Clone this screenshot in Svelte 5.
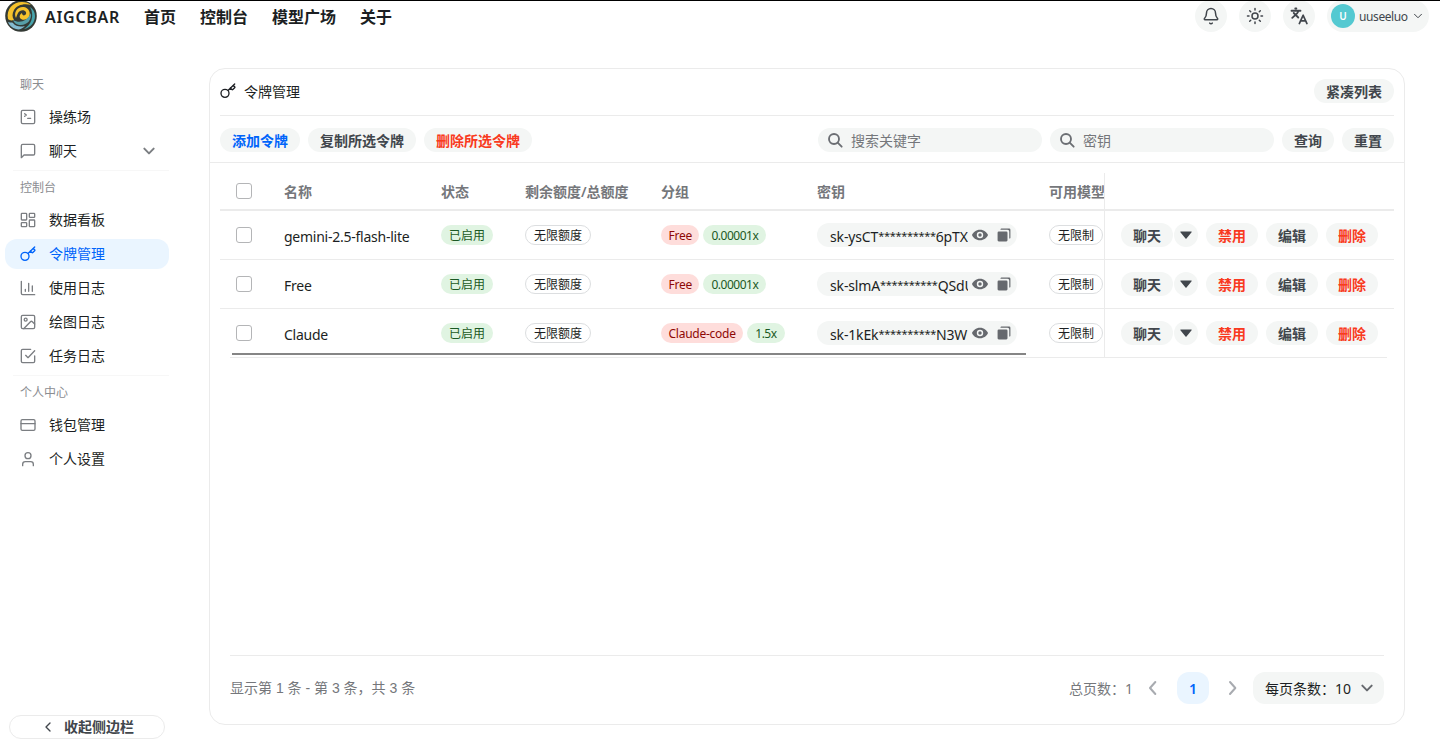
<script lang="ts">
  const navLinks = ['首页', '控制台', '模型广场', '关于'];

  const sections = [
    {
      title: '聊天',
      items: [
        { label: '操练场', icon: 'terminal' },
        { label: '聊天', icon: 'message', expandable: true },
      ],
    },
    {
      title: '控制台',
      items: [
        { label: '数据看板', icon: 'dashboard' },
        { label: '令牌管理', icon: 'key' },
        { label: '使用日志', icon: 'chart' },
        { label: '绘图日志', icon: 'image' },
        { label: '任务日志', icon: 'check' },
      ],
    },
    {
      title: '个人中心',
      items: [
        { label: '钱包管理', icon: 'card' },
        { label: '个人设置', icon: 'user' },
      ],
    },
  ];

  const columns = ['名称', '状态', '剩余额度/总额度', '分组', '密钥', '可用模型'];

  const mask = '**********';

  const tokens = [
    { name: 'gemini-2.5-flash-lite', group: 'Free', ratio: '0.00001x', prefix: 'sk-ysCT', suffix: '6pTX' },
    { name: 'Free', group: 'Free', ratio: '0.00001x', prefix: 'sk-slmA', suffix: 'QSdU' },
    { name: 'Claude', group: 'Claude-code', ratio: '1.5x', prefix: 'sk-1kEk', suffix: 'N3WE' },
  ];

  let activeItem = $state('令牌管理');
  let keyword = $state('');
  let tokenKey = $state('');
  let selected = $state([false, false, false]);
  let allSelected = $derived(selected.every(Boolean));

  function toggleAll() {
    const next = !allSelected;
    selected = selected.map(() => next);
  }

  function reset() {
    keyword = '';
    tokenKey = '';
  }
</script>

{#snippet icon(name: string)}
  <svg class="icon" viewBox="0 0 24 24">
    {#if name === 'terminal'}
      <rect x="2" y="2" width="20" height="20" rx="2" />
      <path d="m7 7 2.500 2L7 11M11.500 14h4.500" />
    {:else if name === 'message'}
      <path d="M22 16a2 2 0 0 1-2 2H6l-4 4V4a2 2 0 0 1 2-2h16a2 2 0 0 1 2 2z" />
    {:else if name === 'dashboard'}
      <rect x="2" y="2" width="8" height="10" rx="1" />
      <rect x="14" y="2" width="8" height="6" rx="1" />
      <rect x="14" y="12" width="8" height="10" rx="1" />
      <rect x="2" y="16" width="8" height="6" rx="1" />
    {:else if name === 'key'}
      <circle cx="7.500" cy="15.500" r="6" />
      <path d="m22 1.500-10 9.600M15.500 7.500l2.300 2.300a1 1 0 0 0 1.400 0l2.800-2.800a1 1 0 0 0 0-1.400L19.500 3.500" />
    {:else if name === 'chart'}
      <path d="M2 2v18a2 2 0 0 0 2 2h18M18.500 17V9M13 17V5M8 17v-3" />
    {:else if name === 'image'}
      <rect x="2" y="2" width="20" height="20" rx="2" />
      <circle cx="8.500" cy="8.500" r="2.200" />
      <path d="m22 15-3.500-3.500a2 2 0 0 0-2.800 0L5.500 22" />
    {:else if name === 'check'}
      <path d="m8.500 11 3.500 3.500L22 4" />
      <path d="M22 12v8a2 2 0 0 1-2 2H4a2 2 0 0 1-2-2V4a2 2 0 0 1 2-2h12" />
    {:else if name === 'card'}
      <rect x="1.500" y="4" width="21" height="16" rx="2" />
      <path d="M1.500 10h21" />
    {:else if name === 'user'}
      <path d="M20 22v-2a4 4 0 0 0-4-4H8a4 4 0 0 0-4 4v2" />
      <circle cx="12" cy="7" r="4.500" />
    {:else if name === 'bell'}
      <path d="M10.300 21.500a2 2 0 0 0 3.400 0" />
      <path d="M3.300 15.300A1 1 0 0 0 4 17h16a1 1 0 0 0 .7-1.700C19.400 14 18 12.500 18 8A6 6 0 0 0 6 8c0 4.500-1.400 6-2.700 7.300" />
    {:else if name === 'sun'}
      <circle cx="12" cy="12" r="4" />
      <path d="M12 2v2M12 20v2M4.900 4.900l1.400 1.400M17.700 17.700l1.400 1.400M2 12h2M20 12h2M6.300 17.700l-1.400 1.400M19.100 4.900l-1.400 1.400" />
    {:else if name === 'language'}
      <path d="m5 8 6 6M3 14.500l6.500-6 2-3.500M2 5h12M7 2h1.500M22.500 22l-5-11-5 11M14 18.500h7" />
    {:else if name === 'down'}
      <path d="m5 8.500 7 7 7-7" />
    {:else if name === 'left'}
      <path d="m15.500 3-8 9 8 9" />
    {:else if name === 'back'}
      <path d="m15 6-6 6 6 6" />
    {:else if name === 'right'}
      <path d="m7.500 3 8 9-8 9" />
    {:else if name === 'search'}
      <circle cx="10.500" cy="10.500" r="7.500" />
      <path d="m16 16 6 6" />
    {:else if name === 'eye'}
      <path class="solid" fill-rule="evenodd" d="M12 4C6 4 1.500 8 0 12c1.500 4 6 8 12 8s10.500-4 12-8c-1.500-4-6-8-12-8Zm0 3.200a4.800 4.800 0 1 1 0 9.600 4.800 4.800 0 0 1 0-9.600Z" />
      <circle class="solid" cx="12" cy="12" r="2.600" />
    {:else if name === 'copy'}
      <path class="solid" d="M6 2a1.500 1.500 0 0 1 1.500-1H21a2 2 0 0 1 2 2v13.500a1.500 1.500 0 0 1-1 1.500h-1V6a3 3 0 0 0-3-3H6Z" />
      <rect class="solid" x="1" y="6" width="17" height="17" rx="2" />
    {:else if name === 'caret'}
      <path class="solid" d="M1.500 5h21a1 1 0 0 1 .7 1.700L13 19.200a1.400 1.400 0 0 1-2 0L.8 6.700A1 1 0 0 1 1.500 5Z" />
    {/if}
  </svg>
{/snippet}

<div class="page">
  <header>
    <svg class="logo" viewBox="0 0 32 32">
      <circle cx="16" cy="16" r="15.800" fill="#343a35" />
      <path d="M3 19C1 9 8 2 17 2c4 0 7 1 9 3-7-2-14 0-17 5-2 4-2 7 0 10-3 1-5 0-6-1Z" fill="#f6c32c" />
      <path d="M11 18C8 12 13 6 19 7c5 1 7 6 5 10-2 3-7 4-9 1-1-2 0-4 2-5 0 3 3 3 4 1 1-3-3-5-6-3-2 1-3 4-4 7Z" fill="#f6c32c" />
      <path d="M25 7c3 2 5 5 5 9 0 7-5 12-11 13 7-4 11-13 6-22Z" fill="#48a5ad" />
      <path d="M26 13c1 7-4 12-10 12-4 0-7-2-8-5 7 4 14 1 18-7Z" fill="#579fa8" />
      <path d="M3 22c3 1 4 0 5 1 3 4 8 4 12 3-3 3-6 4-9 3-4-1-7-4-8-7Z" fill="#83bad0" />
    </svg>
    <span class="brand">AIGCBAR</span>
    <nav>
      {#each navLinks as link}
        <a href="#top">{link}</a>
      {/each}
    </nav>
    <div class="header-actions">
      <button class="round">{@render icon('bell')}</button>
      <button class="round">{@render icon('sun')}</button>
      <button class="round language">{@render icon('language')}</button>
      <button class="account">
        <span class="avatar">U</span>
        <span class="username">uuseeluo</span>
        {@render icon('down')}
      </button>
    </div>
  </header>

  <div class="body">
    <aside>
      {#each sections as section}
        <section>
          <div class="section-title">{section.title}</div>
          {#each section.items as item}
            <button
              class="menu-item"
              class:active={activeItem === item.label && !item.expandable}
              onclick={() => (activeItem = item.label)}
            >
              {@render icon(item.icon)}
              <span>{item.label}</span>
              {#if item.expandable}
                <span class="expand">{@render icon('down')}</span>
              {/if}
            </button>
          {/each}
        </section>
      {/each}
      <button class="collapse">{@render icon('back')}<span>收起侧边栏</span></button>
    </aside>

    <main>
      <div class="card-title">
        {@render icon('key')}
        <span>令牌管理</span>
        <button class="btn">紧凑列表</button>
      </div>

      <div class="toolbar">
        <button class="btn primary">添加令牌</button>
        <button class="btn">复制所选令牌</button>
        <button class="btn danger">删除所选令牌</button>
        <label class="search first">
          {@render icon('search')}
          <input placeholder="搜索关键字" bind:value={keyword} />
        </label>
        <label class="search">
          {@render icon('search')}
          <input placeholder="密钥" bind:value={tokenKey} />
        </label>
        <button class="btn">查询</button>
        <button class="btn" onclick={reset}>重置</button>
      </div>

      <div class="table">
        <div class="row head">
          <div class="cell"><input type="checkbox" checked={allSelected} onchange={toggleAll} /></div>
          {#each columns as column}
            <div class="cell"><span class="label">{column}</span></div>
          {/each}
          <div class="cell fixed"></div>
        </div>
        {#each tokens as token, i}
          <div class="row">
            <div class="cell"><input type="checkbox" bind:checked={selected[i]} /></div>
            <div class="cell name">{token.name}</div>
            <div class="cell"><span class="tag green">已启用</span></div>
            <div class="cell"><span class="tag outline">无限额度</span></div>
            <div class="cell">
              <span class="tag red">{token.group}</span>
              <span class="tag green ratio">{token.ratio}</span>
            </div>
            <div class="cell">
              <div class="key-box">
                <span class="key-text">{token.prefix}<span class="mask">{mask}</span>{token.suffix}</span>
                {@render icon('eye')}
                {@render icon('copy')}
              </div>
            </div>
            <div class="cell"><span class="tag outline">无限制</span></div>
            <div class="cell fixed">
              <div class="split">
                <button class="btn">聊天</button>
                <button class="btn caret">{@render icon('caret')}</button>
              </div>
              <button class="btn danger">禁用</button>
              <button class="btn">编辑</button>
              <button class="btn danger">删除</button>
            </div>
          </div>
        {/each}
        <div class="scrollbar"></div>
      </div>

      <footer>
        <span class="summary">显示第 1 条 - 第 3 条，共 3 条</span>
        <span class="total">总页数：1</span>
        <button class="page-btn">{@render icon('left')}</button>
        <button class="page-btn current">1</button>
        <button class="page-btn">{@render icon('right')}</button>
        <button class="page-size"><span>每页条数：10</span>{@render icon('down')}</button>
      </footer>
    </main>
  </div>
</div>

<style>
  :global(body) {
    margin: 0;
    background: #fff;
  }

  .page {
    width: 1440px;
    height: 744px;
    box-sizing: border-box;
    border-top: 1px solid #000;
    overflow: hidden;
    display: flex;
    flex-direction: column;
    font-family: "Noto Sans", "Noto Sans CJK SC", sans-serif;
    font-size: 14px;
    line-height: 20px;
    color: #1c1f23;
  }

  button {
    font: inherit;
    color: inherit;
    border: 0;
    padding: 0;
    background: none;
    cursor: pointer;
  }

  .icon {
    display: block;
    flex: none;
    width: 16px;
    height: 16px;
    fill: none;
    stroke: currentColor;
    stroke-width: 2;
    stroke-linecap: round;
    stroke-linejoin: round;
  }

  .solid {
    fill: currentColor;
    stroke: none;
  }

  header {
    height: 31px;
    flex: none;
    display: flex;
    align-items: center;
    padding: 0 11px 0 5px;
  }

  .logo {
    width: 32px;
    height: 32px;
    margin-top: -1px;
  }

  .brand {
    margin-left: 8px;
    width: 75px;
    font-size: 16px;
    font-weight: 600;
    letter-spacing: 0.7px;
  }

  nav {
    display: flex;
    gap: 24px;
    margin-left: 24px;
  }

  nav a {
    color: inherit;
    text-decoration: none;
    font-size: 16px;
    font-weight: 600;
  }

  .header-actions {
    display: flex;
    gap: 12px;
    margin: -2px 0 0 auto;
    color: #41464c;
  }

  .round {
    width: 32px;
    height: 32px;
    border-radius: 50%;
    background: #f4f6f5;
    display: grid;
    place-items: center;
  }

  .round .icon {
    width: 18px;
    height: 18px;
  }

  .language .icon {
    stroke-width: 2.4;
  }

  .account {
    width: 102px;
    height: 32px;
    box-sizing: border-box;
    padding: 0 5px 0 4px;
    border-radius: 16px;
    background: #f4f6f5;
    display: flex;
    align-items: center;
  }

  .avatar {
    width: 24px;
    height: 24px;
    line-height: 25px;
    border-radius: 50%;
    background: #54c9d1;
    color: #fff;
    font-size: 10px;
    font-weight: 600;
    text-align: center;
  }

  .username {
    margin: 3px auto 0 4px;
    font-size: 12px;
    letter-spacing: -0.4px;
  }

  .account .icon {
    width: 12px;
    height: 12px;
  }

  .body {
    flex: 1;
    display: flex;
    min-height: 0;
  }

  aside {
    width: 174px;
    box-sizing: border-box;
    padding: 43px 5px 5px;
    display: flex;
    flex-direction: column;
  }

  section + section::before {
    content: "";
    display: block;
    margin: 0 0 0 8px;
    border-top: 1px solid #f7f7f7;
  }

  .section-title {
    height: 20px;
    padding: 0 15px 7px;
    font-size: 12px;
    color: #8b8d91;
  }

  section + section .section-title {
    padding-top: 7px;
  }

  .menu-item {
    width: 164px;
    height: 30px;
    margin: 0 0 4px;
    padding: 0 12px 0 15px;
    border-radius: 12px;
    display: flex;
    align-items: center;
    gap: 13px;
  }

  .menu-item > .icon,
  .expand {
    color: #7b7e82;
  }

  .expand {
    margin-left: auto;
  }

  .expand .icon {
    stroke-width: 3;
  }

  .menu-item.active,
  .menu-item.active > .icon {
    background: #eaf5ff;
    color: #0064fa;
  }

  .collapse {
    margin: auto 0 0 4px;
    width: 156px;
    height: 24px;
    box-sizing: border-box;
    border: 1px solid #ebebeb;
    border-radius: 12px;
    display: flex;
    align-items: center;
    justify-content: center;
    gap: 8px;
    font-weight: 600;
    color: #41464c;
  }

  main {
    width: 1196px;
    height: 657px;
    box-sizing: border-box;
    margin: 36px 0 0 35px;
    border: 1px solid #ebebeb;
    border-radius: 16px;
    display: flex;
    flex-direction: column;
  }

  .card-title {
    height: 47px;
    box-sizing: border-box;
    margin: 0 10px;
    border-bottom: 1px solid #ebebeb;
    display: flex;
    align-items: center;
    gap: 8px;
  }

  .card-title .icon {
    margin-top: -2px;
  }

  .card-title .btn {
    margin: -2px 0 0 auto;
  }

  .btn {
    height: 24px;
    padding: 2px 12px 0;
    border-radius: 12px;
    background: #f4f6f5;
    color: #41464c;
    font-weight: 600;
    white-space: nowrap;
  }

  .btn.primary {
    color: #0064fa;
  }

  .btn.danger {
    color: #f93920;
  }

  .toolbar {
    height: 47px;
    box-sizing: border-box;
    padding: 2px 10px 0;
    border-bottom: 1px solid #ebebeb;
    display: flex;
    align-items: center;
    gap: 8px;
  }

  .search {
    width: 224px;
    height: 24px;
    box-sizing: border-box;
    padding: 0 9px;
    border-radius: 12px;
    background: #f4f6f5;
    color: #6b6e73;
    display: flex;
    align-items: center;
    gap: 8px;
  }

  .search .icon {
    stroke-width: 2.8;
  }

  .search.first {
    margin-left: auto;
  }

  .search input {
    flex: 1;
    min-width: 0;
    padding: 2px 0 0;
    border: 0;
    outline: 0;
    background: none;
    font: inherit;
  }

  .search input::placeholder {
    color: #75777b;
  }

  .table {
    position: relative;
    margin: 10px 10px 0;
  }

  .row {
    height: 49px;
    box-sizing: border-box;
    border-bottom: 1px solid #ebebeb;
    display: grid;
    grid-template-columns: 48px 157px 84px 136px 156px 232px 71px 290px;
  }

  .row.head {
    height: 38px;
    border-bottom-width: 2px;
    font-weight: 600;
    color: #75777b;
  }

  .row:nth-child(4) {
    border-bottom-color: transparent;
    background: linear-gradient(#ebebeb, #ebebeb) 10px 100% / 1157px 1px no-repeat border-box;
  }

  .cell {
    display: flex;
    align-items: center;
    padding-left: 16px;
    gap: 4px;
    min-width: 0;
    overflow: hidden;
    white-space: nowrap;
  }

  .label {
    padding-top: 2px;
  }

  .name {
    padding-top: 3px;
    letter-spacing: -0.25px;
  }

  .fixed {
    border-left: 1px solid #ebebeb;
    gap: 8px;
  }

  input[type="checkbox"] {
    appearance: none;
    width: 16px;
    height: 16px;
    margin: 0;
    border: 1px solid #b4b5b7;
    border-radius: 3px;
    background: #fff;
  }

  input[type="checkbox"]:checked {
    background: #0064fa;
    border-color: #0064fa;
  }

  .tag {
    height: 20px;
    line-height: 21px;
    box-sizing: border-box;
    padding: 0 8px;
    border-radius: 10px;
    font-size: 12px;
  }

  .tag.green {
    background: #e0f4e2;
    color: #1b5924;
  }

  .tag.red {
    padding: 0 7.500px;
    background: #fedddb;
    color: #8e0805;
    letter-spacing: -0.250px;
  }

  .tag.ratio {
    letter-spacing: -0.5px;
  }

  .tag.outline {
    border: 1px solid #dcdee0;
    padding: 0 7.500px 0 8px;
    line-height: 19px;
  }

  .key-box {
    width: 200px;
    height: 24px;
    box-sizing: border-box;
    padding: 0 5px 0 13px;
    border-radius: 12px;
    background: #f4f6f5;
    display: flex;
    align-items: center;
  }

  .key-text {
    width: 138px;
    margin-right: 4px;
    padding-top: 3px;
    overflow: hidden;
    letter-spacing: -0.15px;
  }

  .mask {
    font-size: 11px;
    line-height: 1;
    vertical-align: 2px;
    letter-spacing: -0.3px;
  }

  .key-box .icon {
    width: 16px;
    color: #66696e;
  }

  .key-box .icon + .icon {
    width: 14px;
    height: 14px;
    margin-left: 9px;
  }

  .split {
    display: flex;
    gap: 1px;
  }

  .caret {
    width: 24px;
    padding: 0 6px;
  }

  .caret .icon {
    width: 12px;
    height: 12px;
  }

  .scrollbar {
    position: absolute;
    left: 12px;
    bottom: 3px;
    width: 794px;
    height: 2px;
    background: #858585;
  }

  footer {
    margin: auto 20px 0;
    height: 69px;
    box-sizing: border-box;
    padding: 0 0 4px;
    border-top: 1px solid #ebebeb;
    display: flex;
    align-items: center;
    color: #75777b;
  }

  .summary {
    margin-right: auto;
    font-family: "Liberation Sans", "Noto Sans CJK SC", sans-serif;
  }

  .total {
    padding-top: 1px;
  }

  .page-btn {
    width: 32px;
    height: 32px;
    margin-left: 4px;
    border-radius: 12px;
    display: grid;
    place-items: center;
    color: #a8abb0;
  }

  .page-btn .icon {
    stroke-width: 3;
  }

  .page-btn.current {
    margin: 0 8px;
    padding-top: 2px;
    background: #eaf5ff;
    color: #0064fa;
    font-weight: 600;
  }

  .page-btn.current + .page-btn {
    margin-left: 0;
  }

  .page-size {
    width: 131px;
    height: 32px;
    box-sizing: border-box;
    margin-left: 4px;
    padding: 0 9px 0 12px;
    border-radius: 12px;
    background: #f4f6f5;
    color: #1c1f23;
    display: flex;
    align-items: center;
    white-space: nowrap;
  }

  .page-size span {
    padding-top: 2px;
  }

  .page-size .icon {
    margin-left: auto;
    color: #66696e;
    stroke-width: 3;
  }
</style>
